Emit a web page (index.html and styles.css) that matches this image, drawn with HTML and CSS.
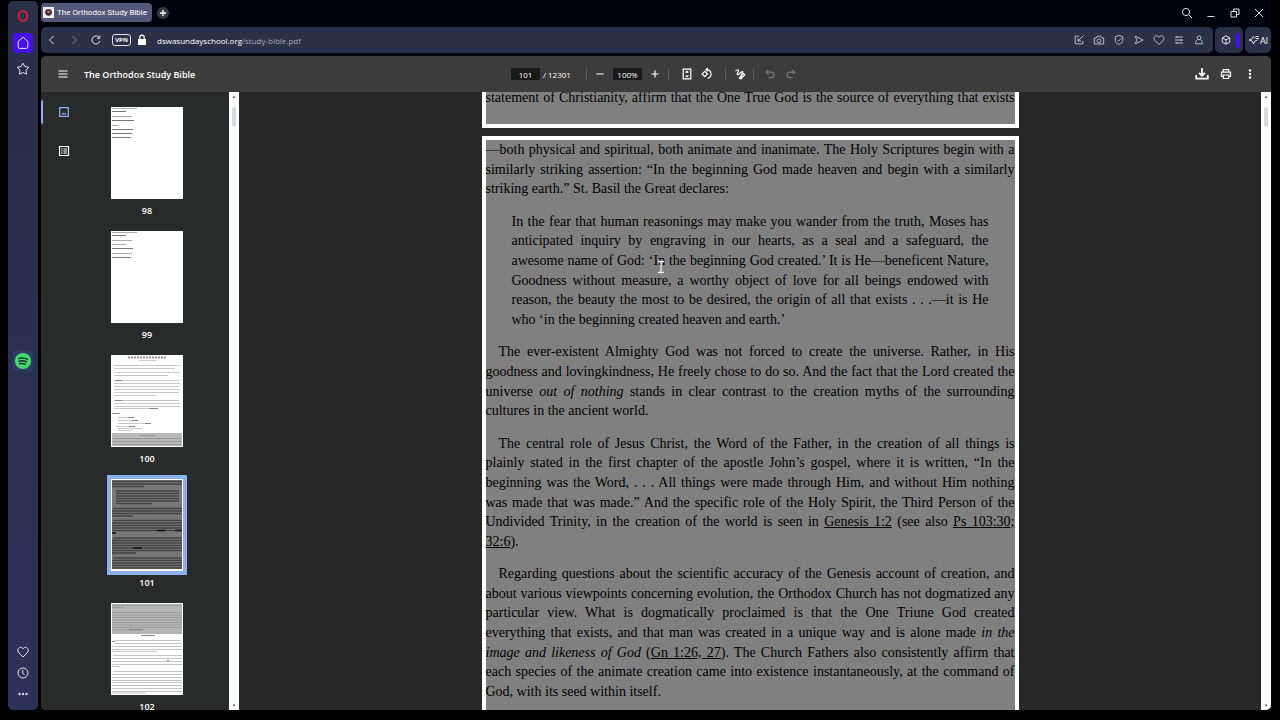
FILE: index.html
```html
<!DOCTYPE html>
<html lang="en">
<head>
<meta charset="utf-8">
<title>The Orthodox Study Bible</title>
<link rel="stylesheet" href="styles.css">
</head>
<body>
<div class="window">
  <nav class="rail" aria-label="Sidebar">
    <button class="rail-btn opera" aria-label="Opera menu"><svg viewBox="0 0 20 20"><ellipse cx="10" cy="10" rx="4.4" ry="4.800" fill="none" stroke="#c81e3a" stroke-width="2.2"/></svg></button>
    <button class="rail-btn home" aria-label="Home"><svg viewBox="0 0 20 20"><path d="M5.2 8.4 10 4.2l4.8 4.2v5.700a1.300 1.300 0 0 1-1.300 1.300h-7a1.300 1.300 0 0 1-1.300-1.300z"/></svg></button>
    <button class="rail-btn star" aria-label="Bookmarks"><svg viewBox="0 0 20 20"><path d="m10 4.200 1.900 3.300 3.800.8-2.600 2.900.4 3.900-3.500-1.600-3.500 1.600.4-3.900-2.600-2.900 3.800-.8z"/></svg></button>
    <button class="rail-btn spotify" aria-label="Spotify"><svg viewBox="0 0 20 20"><circle cx="10" cy="10" r="8" fill="#3ddc6c" stroke="none"/><path d="M5.200 7.600q5-1.600 9.800.9M5.600 10.300q4.400-1.300 8.300.9M6 12.800q3.700-1 6.800.8" stroke="#1d2b2c" stroke-width="1.500"/></svg></button>
    <button class="rail-btn" aria-label="Favourites"><svg viewBox="0 0 20 20"><path d="M10 15 5.900 10.900C3.600 8.400 5.200 5.300 7.600 5.300 9 5.300 9.600 6.100 10 6.900c.4-.8 1-1.600 2.400-1.600 2.400 0 4 3.100 1.700 5.600z"/></svg></button>
    <button class="rail-btn" aria-label="History"><svg viewBox="0 0 20 20"><circle cx="10" cy="10" r="5"/><path d="M9.800 7v3.200l1.800 2"/></svg></button>
    <button class="rail-btn" aria-label="More"><svg viewBox="0 0 20 20"><g fill="#d8dbe6" stroke="none"><circle cx="6.500" cy="10" r="1.200"/><circle cx="10" cy="10" r="1.200"/><circle cx="13.500" cy="10" r="1.200"/></g></svg></button>
  </nav>

  <div class="browser">
    <header class="tabs">
      <button class="tab"><svg class="favicon" viewBox="0 0 11 11"><path fill="#eee" d="M0 0h11v11H0z"/><circle cx="5.500" cy="5.300" r="3.400" fill="#4b2730"/><circle cx="5.500" cy="4.700" r="1.300" fill="#b58268"/></svg>The Orthodox Study Bible</button>
      <button class="new-tab" aria-label="New tab"><svg viewBox="0 0 12 12"><path d="M6 3v6M3 6h6" stroke="#fff" stroke-width="1.300"/></svg></button>
      <div class="window-controls">
        <button aria-label="Search tabs"><svg viewBox="0 0 20 20"><circle cx="9" cy="9" r="3.600"/><path d="m11.700 11.700 3.200 3.200"/></svg></button>
        <button aria-label="Minimise"><svg viewBox="0 0 20 20"><path d="M6.500 13.500h7"/></svg></button>
        <button aria-label="Restore"><svg viewBox="0 0 20 20"><path d="M6 8.500h5.500V14H6zM8.500 8.500V6H14v5.500h-2.500"/></svg></button>
        <button aria-label="Close"><svg viewBox="0 0 20 20"><path d="m6 6 8 8m0-8-8 8"/></svg></button>
      </div>
    </header>

    <div class="address-row">
      <div class="address">
        <button aria-label="Back"><svg viewBox="0 0 20 20"><path d="m11.500 6-4 4 4 4"/></svg></button>
        <button class="dim" aria-label="Forward"><svg viewBox="0 0 20 20"><path d="m8.500 6 4 4-4 4"/></svg></button>
        <button aria-label="Reload"><svg viewBox="0 0 20 20"><path d="M13.800 11a4 4 0 1 1-.7-3.500M13.800 5.500v2.800H11"/></svg></button>
        <button class="vpn">VPN</button>
        <svg class="lock" viewBox="0 0 10 12" aria-hidden="true"><path fill="#fff" d="M1 5h8v6H1z"/><path d="M2.800 5V3.300a2.200 2.200 0 0 1 4.400 0V5" fill="none" stroke="#fff" stroke-width="1.200"/></svg>
        <a class="url" href="#book">dswasundayschool.org<span>/study-bible.pdf</span></a>
        <div class="extensions">
          <button aria-label="Edit"><svg viewBox="0 0 20 20"><path d="M10 6.200H6.200v7.600h7.600V11M9 11l5.300-5.300M9 8.200V11h3"/></svg></button>
          <button aria-label="Snapshot"><svg viewBox="0 0 20 20"><path d="M5.300 8h2l1-1.800h3.400l1 1.800h2v6H5.300z"/><circle cx="10" cy="10.700" r="1.900"/></svg></button>
          <button aria-label="Ad blocker"><svg viewBox="0 0 20 20"><path d="M10 5.500 13.800 6.800v3.400c0 2-1.600 3.300-3.800 4.200-2.200-.9-3.800-2.200-3.800-4.200V6.800zM8.300 9.800l1.300 1.300 3-3"/></svg></button>
          <button aria-label="Send"><svg viewBox="0 0 20 20"><path d="m6.200 6.200 8 3.800-8 3.800L8 10z"/></svg></button>
          <button aria-label="Favourite page"><svg viewBox="0 0 20 20"><path d="M10 14.500 6 10.700C4 8.400 5.500 5.800 7.600 5.800c1.300 0 2 .7 2.400 1.500.4-.8 1.100-1.500 2.400-1.500 2.100 0 3.600 2.600 1.600 4.900z"/></svg></button>
          <button aria-label="Easy setup"><svg viewBox="0 0 20 20"><path d="M6 7h8M6 10h8M6 13h8M8 6v2M12 9v2M8 12v2"/></svg></button>
          <button aria-label="Profile"><svg viewBox="0 0 20 20"><circle cx="10" cy="7.800" r="1.900"/><path d="M8.600 9.500C7 10.300 6.600 12 6.600 13.800h6.800c0-1.800-.4-3.500-2-4.300"/></svg></button>
        </div>
      </div>
      <button class="chip cube" aria-label="Extensions"><svg viewBox="0 0 20 20"><path d="m10 5.800 3.700 2v4.400l-3.700 2-3.700-2V7.800zM6.300 7.800 10 9.800l3.700-2M10 9.800v4.400"/></svg><span class="mark"></span></button>
      <button class="chip ai" aria-label="AI"><svg viewBox="0 0 12 12"><path d="M5.500 2 4.300 4.800 1 6l3.300 1.200L5.500 10l1.200-2.800L9.500 6M6.500 4.500 8 2.500h2.500M8 4.500h3"/></svg>AI</button>
    </div>

    <main class="viewer">
      <div class="toolbar">
        <div class="tool-left">
          <button aria-label="Menu"><svg viewBox="0 0 20 20"><path d="M5.500 7h9M5.500 10h9M5.500 13h9"/></svg></button>
          <h1>The Orthodox Study Bible</h1>
        </div>
        <div class="tool-center">
          <input type="text" value="101" aria-label="Page number">
          <span class="total">/ 12301</span>
          <i class="sep"></i>
          <button aria-label="Zoom out"><svg viewBox="0 0 20 20"><path d="M6.500 10h7"/></svg></button>
          <input class="zoom" type="text" value="100%" aria-label="Zoom level">
          <button aria-label="Zoom in"><svg viewBox="0 0 20 20"><path d="M6.500 10h7M10 6.500v7"/></svg></button>
          <i class="sep tight"></i>
          <button aria-label="Fit to page"><svg viewBox="0 0 20 20"><path d="M6.200 5.200h7.600v9.600H6.200zM8.600 8.500 10 7.200l1.400 1.300M8.600 11.500l1.400 1.300 1.400-1.300"/></svg></button>
          <button aria-label="Rotate"><svg viewBox="0 0 20 20"><path d="m7.800 7.300 2.700 2.700-2.700 2.700L5.100 10zM10.500 14.500A4.500 4.500 0 0 0 10.500 5.700H9.300M10.800 4 9 5.700l1.800 1.700"/></svg></button>
          <i class="sep"></i>
          <button class="ink" aria-label="Draw"><svg viewBox="0 0 20 20"><path d="M5.500 7.200C8 4.500 9.500 6 7.800 8.500c-1 1.600-.8 2.700.6 1.900l2.700-2.200c2-1.400 2.400.2.700 2.200-1.600 1.800-1.300 3.300.4 2.300M9.500 14l3.800-4.600 1.500 1.300-3.900 4.200z"/></svg></button>
          <i class="sep tight"></i>
          <button class="undo" aria-label="Undo" disabled><svg viewBox="0 0 20 20"><path d="M8.500 6 6.300 8.200l2.200 2.200M6.500 8.200h4.700a2.700 2.700 0 0 1 0 5.400H8.500"/></svg></button>
          <button aria-label="Redo" disabled><svg viewBox="0 0 20 20"><path d="m11.500 6 2.200 2.200-2.200 2.200M13.500 8.200H8.800a2.700 2.700 0 0 0 0 5.400h2.700"/></svg></button>
        </div>
        <div class="tool-right">
          <button aria-label="Download"><svg viewBox="0 0 20 20"><path d="M10 4v7.500M7 8.800l3 3 3-3M4.200 11v3.700h11.600V11" stroke-width="1.700"/></svg></button>
          <button aria-label="Print"><svg viewBox="0 0 20 20"><path d="M7.300 8V5.700h5.400V8M7.300 12.500H5.500V8.200h9v4.300h-1.800M7.300 11h5.400v3.500H7.300z"/></svg></button>
          <button aria-label="More actions"><svg viewBox="0 0 20 20"><g fill="#fff" stroke="none"><circle cx="10" cy="6.500" r="1.200"/><circle cx="10" cy="10" r="1.200"/><circle cx="10" cy="13.500" r="1.200"/></g></svg></button>
        </div>
      </div>

      <div class="body">
        <div class="modes">
          <button class="mode active" aria-label="Thumbnails"><svg viewBox="0 0 20 20"><path d="M5.700 5.700h8.600v8.600H5.700z"/><path d="m7.300 12.500 1.600-2 1.400 1.300 1-1.300 1.500 2z" fill="#8ab4f8" stroke="none"/></svg></button>
          <button class="mode" aria-label="Document outline"><svg viewBox="0 0 20 20"><path d="M5.500 5.500h9v9h-9z"/><path d="M7.300 8h1.200M9.500 8h3.400M7.300 10h1.200M9.500 10h3.400M7.300 12h1.200M9.500 12h3.400"/></svg></button>
        </div>
        <ol class="thumbs">
          <li><button class="thumb" aria-label="Page 98"><svg viewBox="0 0 72 92"><path stroke="#aaa" d="M1 1.500h25M1 9.500h20M1 18.500h6"/><path stroke="#777" d="M1 4.500h14M1 13.500h22M1 22.500h21M1 26.500h20M1 30.500h19"/></svg></button><span>98</span></li>
          <li><button class="thumb" aria-label="Page 99"><svg viewBox="0 0 72 92"><path stroke="#aaa" d="M1 1.500h25M1 9.500h20M1 13.500h14M1 22.500h20"/><path stroke="#777" d="M1 4.500h14M1 17.500h21M1 26.500h19"/></svg></button><span>99</span></li>
          <li><button class="thumb" aria-label="Page 100"><svg viewBox="0 0 72 92"><path fill="#b9b9b9" stroke="none" d="M1 78h70v13H1z"/><path stroke="#a08d97" stroke-width="2" stroke-dasharray="2 1" d="M17 2.500h38"/><path stroke="#c9c9c9" d="M28 5.500h17M3 10.500h66M3 13.500h61M3 17.500h66M3 20.500h54M3 25.500h65M3 28.500h66M3 31.500h65M3 34.500h66M3 37.500h65M3 40.500h42M3 45.500h65M3 48.500h66M3 51.500h66M3 53.500h42M7 62.500h16M7 65.500h20M7 68.500h32M5 71.500h20M7 73.500h24M7 75.500h14"/><path stroke="#888" d="M4 25.500h7M4 45.500h7M1 58.500h8M17 62.500h6M21 65.500h6M34 68.500h6M18 71.500h6M38 53.500h9"/><path stroke="#999" d="M28 80.500h16M2 83.500h68M2 86.500h68M2 89.500h68"/></svg></button><span>100</span></li>
          <li><button class="thumb selected" aria-label="Page 101"><svg viewBox="0 0 72 92"><path fill="#777" stroke="none" d="M1 1h70v89H1z"/><path stroke="#444" stroke-width="1.400" d="M1 2.500h70M1 5h70M1 7.500h32M5 12h63M5 14.500h63M5 17h63M5 19.500h63M5 22h63M5 24.500h36M2 29.500h69M1 32h70M1 34.500h70M1 37h21M2 41.500h69M1 44h70M1 46.500h70M1 49h70M1 51.500h70M2 59h69M1 61.500h70M1 64h70M1 66.500h70M1 69h70M1 71.500h70M1 74h24M2 79h69M1 81.500h70M1 84h70M1 86.500h70M1 89h70"/><path stroke="#111" stroke-width="1.500" d="M1 54h4M46 51.500h8M64 51.500h7M22 69h9"/></svg></button><span>101</span></li>
          <li><button class="thumb" aria-label="Page 102"><svg viewBox="0 0 72 92"><path fill="#b5b5b5" stroke="none" d="M1 1h70v30H1z"/><path stroke="#9c9c9c" d="M1 2.500h70M1 4.500h12M1 9.500h70M1 12h70M1 14.500h70M1 17h70M1 19.500h70M1 22h70M1 24.500h70M1 27h31"/><path stroke="#888" d="M30 32.500h14M1 38.500h3M56 57.500h2M18 26.500h14"/><path stroke="#c4c4c4" d="M4 37.500h66M4 40.500h67M1 43.500h70M1 46.500h70M1 48.500h45M2 52.500h69M1 55.500h70M1 58.500h70M1 61.500h70M1 63.500h8M2 68.500h69M1 71.500h70M1 74.500h70M1 77.500h70M1 79.500h70M1 82.500h70M1 85.500h70M1 88.500h70M1 90h34"/></svg></button><span>102</span></li>
        </ol>
        <div class="scrollbar"><span class="arrow">▴</span><span class="grip"></span><span class="arrow">▾</span></div>
        <div class="document" id="book">
          <article class="page previous"><p><span>statement of Christianity, affirm that the One True God is the source of everything that exists</span></p></article>
          <article class="page current">
            <p class="ragged"><span>—both physical and spiritual, both animate and inanimate. The Holy Scriptures begin with a</span>
            <span>similarly striking assertion: “In the beginning God made heaven and begin with a similarly</span>
            <span>striking earth.” St. Basil the Great declares:</span></p>
            <blockquote class="ragged"><span>In the fear that human reasonings may make you wander from the truth, Moses has</span>
            <span>anticipated inquiry by engraving in our hearts, as a seal and a safeguard, the</span>
            <span>awesome name of God: ‘In the beginning God created.’ It is He—beneficent Nature,</span>
            <span>Goodness without measure, a worthy object of love for all beings endowed with</span>
            <span>reason, the beauty the most to be desired, the origin of all that exists . . .—it is He</span>
            <span>who ‘in the beginning created heaven and earth.’</span></blockquote>
            <p class="indent ragged"><span>The ever-existent Almighty God was not forced to create the universe. Rather, in His</span>
            <span>goodness and lovingkindness, He freely chose to do so. And the fact that the Lord created the</span>
            <span>universe <em>out of nothing</em> stands in clear contrast to the creation myths of the surrounding</span>
            <span>cultures in the ancient world.</span></p>
            <p class="indent ragged"><span>The central role of Jesus Christ, the Word of the Father, in the creation of all things is</span>
            <span>plainly stated in the first chapter of the apostle John’s gospel, where it is written, “In the</span>
            <span>beginning was the Word, . . . All things were made through Him, and without Him nothing</span>
            <span>was made that was made.” And the specific role of the Holy Spirit, the Third Person of the</span>
            <span>Undivided Trinity, in the creation of the world is seen in <a href="#book">Genesis 1:2</a> (see also <a href="#book">Ps 103:30;</a></span>
            <span><a href="#book">32:6</a>).</span></p>
            <p class="indent ragged"><span>Regarding questions about the scientific accuracy of the Genesis account of creation, and</span>
            <span>about various viewpoints concerning evolution, the Orthodox Church has not dogmatized any</span>
            <span>particular view. What is dogmatically proclaimed is that the One Triune God created</span>
            <span>everything that exists, and that man was created in a unique way and is alone made <em>in the</em></span>
            <span><em>image and likeness of God</em> (<a href="#book">Gn 1:26, 27</a>). The Church Fathers also consistently affirm that</span>
            <span>each species of the animate creation came into existence instantaneously, at the command of</span>
            <span>God, with its seed within itself.</span></p>
            <svg class="cursor" viewBox="0 0 8 14" aria-hidden="true"><path d="M1 1.500h6M4 1.500v11M1 12.500h6" stroke="#eee" stroke-width="1.300"/></svg>
          </article>
        </div>
        <div class="scrollbar"><span class="arrow">▴</span><span class="grip"></span><span class="arrow">▾</span></div>
      </div>
    </main>
  </div>
</div>
</body>
</html>
```
FILE: styles.css
```css
* { box-sizing: border-box; }
body { margin: 0; background: #000; color: #fff; font-family: "Open Sans", "Noto Sans", sans-serif; font-size: 9px; }
button { display: flex; align-items: center; justify-content: center; flex: none; margin: 0; padding: 0; border: 0; background: none; color: inherit; font: inherit; width: 20px; height: 20px; }
svg { display: block; flex: none; fill: none; stroke: #dfe2ec; stroke-width: 1; }
button > svg { width: 20px; height: 20px; }
a { color: inherit; }

.window { display: flex; gap: 3px; height: 100vh; padding: 0 9px 10px 8px; overflow: hidden; }
.rail { display: flex; flex-direction: column; align-items: center; flex: none; width: 30px; margin-top: 1px; padding: 5px 0 6px; gap: 1px; border-radius: 5px; background: linear-gradient(#29304a, #2c3157); }
.rail-btn { border-radius: 4px; }
.home { margin-top: 6px; background: #4610e8; }
.star { margin-top: 5px; }
.spotify { margin: auto 0; background: #303a68; }

.browser { display: flex; flex-direction: column; flex: 1; min-width: 0; background: #02020f; }
.tabs { display: flex; align-items: center; height: 27px; padding-bottom: 2px; }
.tab { gap: 3px; width: auto; height: 19px; padding: 0 5px 0 2px; border-radius: 4px; background: #545777; font-family: Roboto, sans-serif; font-size: 8px; }
.tab .favicon { width: 11px; height: 11px; stroke: none; }
.new-tab { width: 12px; height: 12px; margin-left: 5px; border-radius: 50%; background: #383942; }
.new-tab svg { width: 12px; height: 12px; }
.window-controls { display: flex; gap: 4px; margin-left: auto; padding-right: 2px; }

.address-row { display: flex; gap: 2px; height: 26px; }
.address, .chip { background: #2a3148; border-radius: 5px; }
.address { display: flex; align-items: center; flex: 1; gap: 2px; padding-left: 1px; }
.dim { opacity: .4; }
.vpn { width: 19px; height: 12px; margin: 0 4px; border: 1px solid #dfe2ec; border-radius: 3px; font-size: 6px; font-weight: 700; }
.lock { width: 10px; height: 12px; stroke: none; }
.url { margin-left: 8px; font-size: 8px; text-decoration: none; }
.url span { color: #a3a8b8; }
.extensions { display: flex; margin-left: auto; padding-right: 4px; }
.extensions svg { stroke: #b4bacb; }
.chip { height: 26px; }
.cube { justify-content: flex-start; width: 28px; padding-left: 1px; }
.mark { width: 4px; height: 15px; border-radius: 2px; background: #4610e8; }
.ai { width: 26px; font-size: 9px; }
.ai svg { width: 12px; height: 12px; }

.viewer { display: flex; flex-direction: column; flex: 1; min-height: 0; margin-top: 3px; border-radius: 5px; overflow: hidden; background: #282828; }
.toolbar { display: grid; grid-template-columns: 1fr auto 1fr; align-items: center; flex: none; height: 36px; background: #3c3c3c; }
.toolbar svg { stroke: #fff; stroke-width: 1.2; }
.tool-left, .tool-center, .tool-right { display: flex; align-items: center; }
.tool-left { gap: 11px; padding-left: 12px; }
.tool-right { justify-content: flex-end; gap: 4px; padding-right: 11px; }
h1 { margin: 0; font-size: 9px; font-weight: 600; white-space: nowrap; }
input { width: 29px; height: 12px; padding: 0; border: 0; background: #191919; color: #fff; font: inherit; font-size: 8px; text-align: center; }
.total { width: 35px; margin-left: 3px; font-size: 8px; white-space: nowrap; }
.zoom { margin: 0 3px; }
.sep { width: 1px; height: 12px; margin: 0 9px 0 8px; background: #5c5c5c; }
.total + .sep { margin-right: 3px; }
.tight { margin-left: 3px; }
.tight + button { margin-left: -1px; }
.sep + .ink { margin-left: -5px; }
.ink + .sep { margin-right: 7px; }
.undo { margin-right: 1px; }
button:disabled svg { stroke: #777; }

.body { display: flex; flex: 1; min-height: 0; }
.modes { display: flex; flex-direction: column; gap: 15px; width: 46px; padding-top: 8px; background: #292b2a; }
.mode { width: 46px; height: 24px; padding-right: 3px; border-left: 2px solid transparent; border-radius: 2px; }
.mode svg { stroke: #fff; stroke-width: 1.2; }
.mode.active { border-color: #8ab4f8; }
.active svg { stroke: #8ab4f8; }
.thumbs { width: 142px; margin: 0; padding: 15px 0 0; list-style: none; overflow: hidden; background: #292b2a; }
.thumbs li { display: flex; flex-direction: column; align-items: center; gap: 4px; width: 120px; margin-bottom: 12px; }
.thumbs span { font-size: 9px; font-weight: 600; line-height: 16px; }
.thumb { width: 72px; height: 92px; background: #fff; }
.thumb svg { width: 72px; height: 92px; stroke-width: 1; }
.selected { outline: 4px solid #8ab0ee; }
.scrollbar { display: flex; flex-direction: column; align-items: center; flex: none; width: 10px; background: #fff; }
.arrow { height: 9px; color: #555; font: 5px/9px "DejaVu Sans", sans-serif; }
.grip { width: 4px; height: 20px; margin-top: 6px; margin-bottom: auto; border-radius: 2px; background: #d7dadd; }

.document { display: flex; flex-direction: column; align-items: center; gap: 8px; flex: 1; min-width: 0; overflow: hidden; }
.page { position: relative; flex: none; width: 100%; max-width: 537px; border: 4px solid #fff; background: #808080; color: #000; font-family: "Liberation Serif", serif; font-size: 14px; line-height: 1.4; }
.previous { height: 36px; border-top: 0; }
.previous p { margin-top: -4px; }
.page p, .page blockquote { margin-bottom: 13px; }
.page p { margin-left: 0; margin-right: 0; }
.current p { margin-top: 0; }
.page blockquote { margin-top: 0; margin-left: 26px; margin-right: 26px; }
.page span { display: block; white-space: nowrap; text-align: justify; text-align-last: justify; }
.ragged span:last-child { text-align-last: left; }
.indent span:first-child { padding-left: 13px; }
.cursor { position: absolute; left: 171px; top: 120px; width: 8px; height: 14px; }
```
